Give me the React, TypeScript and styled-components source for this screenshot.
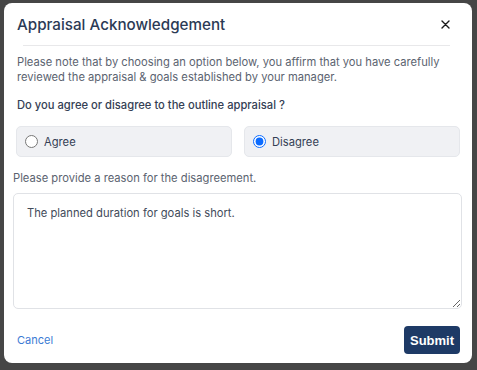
import React, { useState } from "react";
import styled, { createGlobalStyle } from "styled-components";

const Global = createGlobalStyle`
  html, body { margin: 0; padding: 0; background: #464646; }
  body { font-family: Inter, "Noto Sans", sans-serif; }
  * { box-sizing: border-box; }
`;

const Backdrop = styled.div`
  width: 477px;
  height: 370px;
  padding: 3px 5px 7px 4px;
  background: #464646;
`;

const Modal = styled.div`
  background: #fff;
  border-radius: 8px;
  height: 360px;
  display: flex;
  flex-direction: column;
  padding: 0 12px 0 9px;
`;

const Header = styled.div`
  display: flex;
  align-items: center;
  justify-content: space-between;
  height: 42px;
  padding: 0 9px 0 4px;
`;

const Title = styled.h2`
  margin: 0;
  font-size: 15.2px;
  font-weight: 500;
  color: #2b3a55;
`;

const Close = styled.button`
  border: none;
  background: none;
  padding: 0;
  width: 12px;
  height: 12px;
  display: flex;
  align-items: center;
  justify-content: center;
  cursor: pointer;
`;

const Divider = styled.hr`
  margin: 0 10px 0 10px;
  border: none;
  border-top: 1px solid #e8e8ea;
`;

const Body = styled.div`
  display: flex;
  flex-direction: column;
  padding: 9px 0 0 0;
`;

const Note = styled.p`
  margin: 0 0 0 4px;
  font-size: 11.2px;
  line-height: 15px;
  color: #5b6370;
`;

const Question = styled.p`
  margin: 13px 0 0 4px;
  font-size: 11.2px;
  font-weight: 500;
  line-height: 15px;
  color: #344054;
`;

const Options = styled.div`
  display: grid;
  grid-template-columns: 1fr 1fr;
  gap: 12px;
  margin: 13px 0 0 3px;
`;

const OptionCard = styled.label`
  display: flex;
  align-items: center;
  gap: 6px;
  height: 31px;
  padding: 0 8px;
  background: #f0f1f4;
  border: 1px solid #e5e7eb;
  border-radius: 5px;
  font-size: 11.2px;
  color: #344054;
  cursor: pointer;
`;

const Radio = styled.input`
  margin: 0;
  width: 13px;
  height: 13px;
  accent-color: #0b6bff;
`;

const ReasonLabel = styled.p`
  margin: 14px 0 0 0;
  font-size: 11.2px;
  line-height: 15px;
  color: #5b6370;
`;

const TextArea = styled.textarea`
  margin: 7px 0 0 0;
  width: 449px;
  height: 116px;
  border: 1px solid #e0e2e6;
  border-radius: 5px;
  padding: 12px 13px;
  font-family: Inter, "Noto Sans", sans-serif;
  font-size: 11.2px;
  line-height: 15px;
  color: #424b5a;
  resize: vertical;
  outline: none;
`;

const Footer = styled.div`
  display: flex;
  align-items: center;
  justify-content: space-between;
  margin-top: 17px;
  padding: 0 0 0 4px;
`;

const CancelLink = styled.a`
  font-size: 11px;
  color: #3b7bd4;
  text-decoration: none;
  cursor: pointer;
`;

const SubmitButton = styled.button`
  height: 28px;
  padding: 0;
  width: 56px;
  background: #1e3a66;
  color: #fff;
  border: none;
  border-radius: 4px;
  font-family: "Liberation Sans", Arial, sans-serif;
  font-weight: 700;
  font-size: 13px;
  cursor: pointer;
`;

export default function App() {
  const [choice, setChoice] = useState<"agree" | "disagree">("disagree");
  const [reason, setReason] = useState("The planned duration for goals is short.");
  return (
    <>
      <Global />
      <Backdrop>
        <Modal>
          <Header>
            <Title>Appraisal Acknowledgement</Title>
            <Close aria-label="Close">
              <svg width="9" height="9" viewBox="0 0 9 9">
                <path d="M1 1L8 8M8 1L1 8" stroke="#1a1a1a" strokeWidth="1.4" strokeLinecap="round" />
              </svg>
            </Close>
          </Header>
          <Divider />
          <Body>
            <Note>
              Please note that by choosing an option below, you affirm that you have carefully
              reviewed the appraisal &amp; goals established by your manager.
            </Note>
            <Question>Do you agree or disagree to the outline appraisal ?</Question>
            <Options>
              <OptionCard>
                <Radio type="radio" name="ack" checked={choice === "agree"} onChange={() => setChoice("agree")} />
                Agree
              </OptionCard>
              <OptionCard>
                <Radio type="radio" name="ack" checked={choice === "disagree"} onChange={() => setChoice("disagree")} />
                Disagree
              </OptionCard>
            </Options>
            <ReasonLabel>Please provide a reason for the disagreement.</ReasonLabel>
            <TextArea value={reason} onChange={(e) => setReason(e.target.value)} />
            <Footer>
              <CancelLink>Cancel</CancelLink>
              <SubmitButton>Submit</SubmitButton>
            </Footer>
          </Body>
        </Modal>
      </Backdrop>
    </>
  );
}
